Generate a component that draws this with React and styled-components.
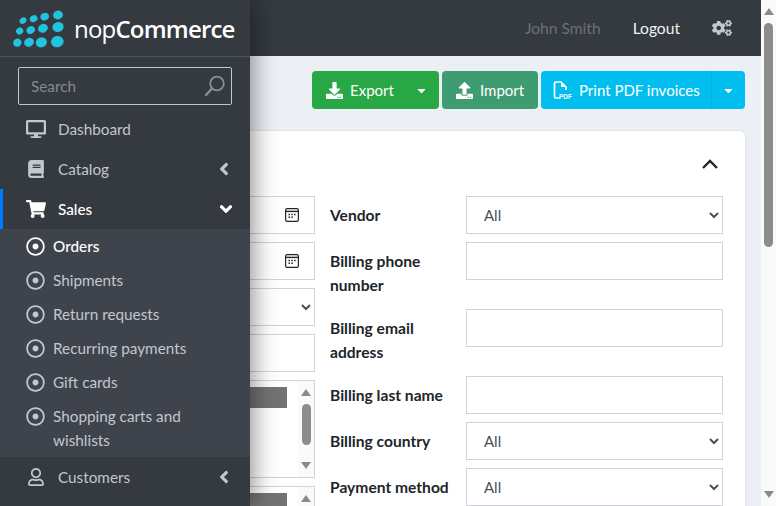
import * as React from 'react';
import styled, { createGlobalStyle } from 'styled-components';
import {
    FaDesktop, FaBook, FaShoppingCart, FaRegDotCircle, FaRegUser,
    FaAngleLeft, FaAngleDown, FaDownload, FaUpload, FaCogs, FaCaretDown
} from 'react-icons/fa';

const font = `Lato, "Noto Sans", "Liberation Sans", sans-serif`;

const GlobalStyle = createGlobalStyle`
html, body {
    margin: 0;
    padding: 0;
    height: 100%;
    overflow: hidden;
}
* {
    box-sizing: border-box;
}
body {
    font-family: ${font};
    font-size: 15.3px;
    color: #212529;
    background: #ecf0f5;
}
`;

const subItems = [
    { label: 'Orders', active: true },
    { label: 'Shipments' },
    { label: 'Return requests' },
    { label: 'Recurring payments' },
    { label: 'Gift cards' },
    { label: 'Shopping carts and wishlists' }
];

const Logo = () => (
    <svg width="60" height="46" viewBox="0 0 180 138">
        <g fill="#22c3e0">
            <ellipse cx="45" cy="47" rx="11" ry="9" transform="rotate(-35 45 47)" />
            <ellipse cx="77" cy="41" rx="12" ry="10" transform="rotate(-30 77 41)" />
            <ellipse cx="110" cy="35" rx="13" ry="11" transform="rotate(-25 110 35)" />
            <ellipse cx="150" cy="30" rx="15" ry="13" transform="rotate(-15 150 30)" />
            <ellipse cx="35" cy="78" rx="11" ry="10" transform="rotate(-35 35 78)" />
            <ellipse cx="68" cy="75" rx="13" ry="11" transform="rotate(-30 68 75)" />
            <ellipse cx="105" cy="70" rx="15" ry="13" transform="rotate(-25 105 70)" />
            <ellipse cx="150" cy="66" rx="17" ry="15" transform="rotate(-15 150 66)" />
            <ellipse cx="28" cy="113" rx="13" ry="12" transform="rotate(-30 28 113)" />
            <ellipse cx="63" cy="112" rx="15" ry="13" transform="rotate(-25 63 112)" />
            <ellipse cx="100" cy="112" rx="17" ry="15" transform="rotate(-20 100 112)" />
            <ellipse cx="148" cy="110" rx="19" ry="17" transform="rotate(-10 148 110)" />
        </g>
    </svg>
);

const SearchGlyph = () => (
    <svg width="22" height="22" viewBox="0 0 22 22" fill="none" stroke="#8b9097" strokeWidth="1.8">
        <circle cx="13" cy="8.5" r="6.8" />
        <path d="M8 13.5 L2 20" strokeWidth="2.4" strokeLinecap="round" />
    </svg>
);

const CalendarGlyph = () => (
    <svg width="14" height="14" viewBox="0 0 14 14" fill="none" stroke="#212529">
        <rect x="0.6" y="0.6" width="12.8" height="12.8" rx="1.6" strokeWidth="1.2" />
        <path d="M1 3.4 H13" strokeWidth="1.4" />
        <path d="M3.5 6.500h1.500M6.300 6.500h1.500M9.100 6.500h1.500M3.500 9.300h1.500M6.300 9.300h1.500" strokeWidth="1.5" />
    </svg>
);

const PdfGlyph = () => (
    <svg width="19" height="19" viewBox="0 0 19 19" fill="none">
        <path d="M7 17H3a1.5 1.5 0 0 1-1.5-1.5V2.500A1.500 1.500 0 0 1 3 1h5l5 5v3" stroke="#fff" strokeWidth="1.7" />
        <path d="M8 1v5h5z" fill="#fff" />
        <text x="6" y="18" fontFamily="Liberation Sans, sans-serif" fontWeight="700" fontSize="6.5" fill="#fff">PDF</text>
    </svg>
);

const CollapseGlyph = () => (
    <svg width="16" height="10" viewBox="0 0 16 10" fill="none" stroke="#212529" strokeWidth="2.4">
        <path d="M1 9 L8 2 L15 9" />
    </svg>
);

const App = () => (
    <Shell>
        <GlobalStyle />
        <Sidebar>
            <Brand>
                <Logo />
                <BrandText>nop<b>Commerce</b></BrandText>
            </Brand>
            <SearchBox>
                <SearchInput placeholder="Search" />
                <SearchGlyph />
            </SearchBox>
            <Menu>
                <MenuItem><MenuIcon><FaDesktop /></MenuIcon>Dashboard</MenuItem>
                <MenuItem><MenuIcon $small><FaBook /></MenuIcon>Catalog<Arrow><FaAngleLeft /></Arrow></MenuItem>
                <MenuItem $open><MenuIcon><FaShoppingCart /></MenuIcon>Sales<Arrow $down><FaAngleDown /></Arrow></MenuItem>
                <SubMenu>
                    {subItems.map(item => (
                        <SubItem key={item.label} $active={item.active}>
                            <SubIcon><FaRegDotCircle /></SubIcon>
                            <span>{item.label}</span>
                        </SubItem>
                    ))}
                </SubMenu>
                <MenuItem><MenuIcon $small><FaRegUser /></MenuIcon>Customers<Arrow><FaAngleLeft /></Arrow></MenuItem>
            </Menu>
        </Sidebar>
        <Main>
            <TopBar>
                <UserName>John Smith</UserName>
                <Logout>Logout</Logout>
                <Gears><FaCogs /></Gears>
            </TopBar>
            <Actions>
                <Button $bg="#28a745" $width="127px">
                    <BtnIcon><FaDownload /></BtnIcon>Export<Caret><FaCaretDown /></Caret>
                </Button>
                <Button $bg="#3f9c72" $width="96px">
                    <BtnIcon><FaUpload /></BtnIcon>Import
                </Button>
                <SplitButton>
                    <SplitMain><BtnIcon><PdfGlyph /></BtnIcon>Print PDF invoices</SplitMain>
                    <SplitCaret><FaCaretDown /></SplitCaret>
                </SplitButton>
            </Actions>
            <Card>
                <CardHead><CollapseGlyph /></CardHead>
                <CardBody>
                    <LeftCol>
                        <Field><CalendarGlyph /></Field>
                        <Field><CalendarGlyph /></Field>
                        <Select><option>&nbsp;</option></Select>
                        <Field />
                        <ListBox>
                            <ListTag />
                            <ListScroll>
                                <ScrollUp />
                                <ListThumb />
                                <ScrollDown />
                            </ListScroll>
                        </ListBox>
                        <ListBox>
                            <ListTag />
                            <ListScroll>
                                <ScrollUp />
                                <ListThumb />
                                <ScrollDown />
                            </ListScroll>
                        </ListBox>
                    </LeftCol>
                    <RightCol>
                        <Row><Label>Vendor</Label><Select><option>All</option></Select></Row>
                        <Row><Label>Billing phone number</Label><Field /></Row>
                        <Row><Label>Billing email address</Label><Field /></Row>
                        <Row><Label>Billing last name</Label><Field /></Row>
                        <Row><Label>Billing country</Label><Select><option>All</option></Select></Row>
                        <Row><Label>Payment method</Label><Select><option>All</option></Select></Row>
                    </RightCol>
                </CardBody>
            </Card>
        </Main>
        <PageScroll>
            <ScrollUp />
            <PageThumb />
            <Spacer />
            <ScrollDown />
        </PageScroll>
    </Shell>
);

const Shell = styled.div`
display: flex;
height: 506px;
width: 776px;
overflow: hidden;
`;

const Sidebar = styled.aside`
position: relative;
z-index: 2;
flex: 0 0 250px;
height: 506px;
overflow: hidden;
background: #343a40;
color: #c2c7d0;
box-shadow: 4px 0 22px rgba(0, 0, 0, 0.42);
`;

const Brand = styled.div`
display: flex;
align-items: center;
gap: 6px;
height: 57px;
padding-left: 8px;
border-bottom: 1px solid #4b545c;
`;

const BrandText = styled.div`
font-family: "Open Sans", sans-serif;
font-size: 24px;
font-weight: 400;
letter-spacing: -0.8px;
color: #fff;

> b {
    font-weight: 600;
}
`;

const SearchBox = styled.div`
display: flex;
align-items: center;
height: 38px;
margin: 10px 18px 5px;
padding: 0 5px 0 12px;
border: 1px solid #c2c7d0;
border-radius: 2px;
`;

const SearchInput = styled.input`
flex: 1;
min-width: 0;
border: 0;
outline: 0;
padding: 0;
background: transparent;
font: 15.3px ${font};
color: #fff;

&::placeholder {
    color: #858a91;
    opacity: 1;
}
`;

const Menu = styled.nav`
display: flex;
flex-direction: column;
margin-top: -1px;
`;

const MenuItem = styled.div`
display: flex;
align-items: center;
height: 40px;
padding-left: 25px;
border-left: 3px solid ${props => props.$open ? '#007bff' : 'transparent'};
color: ${props => props.$open ? '#fff' : '#c2c7d0'};
font-weight: ${props => props.$open ? 500 : 400};
`;

const MenuIcon = styled.span`
display: flex;
justify-content: center;
flex: 0 0 22px;
margin-left: -3px;
margin-right: 11px;
font-size: ${props => props.$small ? '18px' : '20px'};
`;

const Arrow = styled.span`
display: flex;
margin-left: auto;
margin-right: ${props => props.$down ? '14px' : '16px'};
font-size: 20px;
`;

const SubMenu = styled.div`
display: flex;
flex-direction: column;
background: #3f444c;
`;

const SubItem = styled.div`
display: flex;
align-items: flex-start;
gap: 8px;
padding: 5px 40px 5px 26px;
line-height: 24px;
color: ${props => props.$active ? '#fff' : '#c2c7d0'};
font-weight: ${props => props.$active ? 500 : 400};
`;

const SubIcon = styled.span`
display: flex;
align-items: center;
height: 24px;
font-size: 19px;
`;

const Main = styled.div`
flex: 1;
min-width: 0;
display: flex;
flex-direction: column;
`;

const TopBar = styled.header`
display: flex;
align-items: center;
justify-content: flex-end;
flex: 0 0 56px;
padding-right: 29px;
background: #343a40;
font-size: 15.6px;
`;

const UserName = styled.span`
color: #6c7076;
margin-right: 32px;
`;

const Logout = styled.span`
color: #f2f3f4;
margin-right: 32px;
`;

const Gears = styled.span`
display: flex;
color: #c2c7d0;
font-size: 20px;
`;

const Actions = styled.div`
display: flex;
justify-content: flex-end;
gap: 3px;
padding: 15px 16px 22px;
font-size: 15px;
`;

const Button = styled.div`
display: flex;
align-items: center;
height: 38px;
width: ${props => props.$width};
padding-left: 13px;
border-radius: 4px;
background: ${props => props.$bg};
color: #fff;
`;

const BtnIcon = styled.span`
display: flex;
justify-content: center;
flex: 0 0 18px;
margin-right: 7px;
font-size: 17px;
`;

const Caret = styled.span`
display: flex;
margin-left: auto;
margin-right: 11px;
font-size: 13px;
`;

const SplitButton = styled.div`
display: flex;
height: 38px;
width: 204px;
border-radius: 4px;
background: #00bff0;
color: #fff;
`;

const SplitMain = styled.div`
display: flex;
align-items: center;
flex: 1;
padding-left: 12px;
`;

const SplitCaret = styled.div`
display: flex;
align-items: center;
justify-content: center;
flex: 0 0 34px;
padding-right: 1px;
border-left: 1px solid #0eaedb;
font-size: 13px;
`;

const Card = styled.section`
flex: 1;
margin-right: 16px;
padding: 0 22px 0 0;
border-radius: 0 5px 0 0;
background: #fff;
box-shadow: 0 0 2px rgba(0, 0, 0, 0.2);
`;

const CardHead = styled.div`
display: flex;
align-items: center;
justify-content: flex-end;
height: 65px;
padding-right: 5px;
`;

const CardBody = styled.div`
display: flex;
gap: 15px;
`;

const LeftCol = styled.div`
display: flex;
flex-direction: column;
flex: 0 0 66px;
margin-left: -1px;
gap: 8px;
`;

const RightCol = styled.div`
display: flex;
flex-direction: column;
flex: 1;
gap: 8px;
`;

const Row = styled.div`
display: grid;
grid-template-columns: 136px 1fr;
align-items: start;
`;

const Label = styled.div`
width: 125px;
padding: 7px 0 4px;
line-height: 24px;
font-size: 15.6px;
font-weight: 700;
color: #212529;
`;

const Field = styled.div`
display: flex;
align-items: center;
justify-content: flex-end;
height: 38px;
padding-right: 15px;
border: 1px solid #ced4da;
background: #fff;
`;

const Select = styled.select`
display: block;
width: 100%;
height: 38px;
padding: 0 12px 1px 13px;
border: 1px solid #ced4da;
border-radius: 0;
background: #fff;
font: 15px ${font};
color: #495057;
`;

const ListBox = styled.div`
display: flex;
justify-content: space-between;
flex: 0 0 98px;
padding: 6px 0 0;
border: 1px solid #ced4da;
background: #fff;
`;

const ListTag = styled.div`
width: 37px;
height: 21px;
background: #737373;
`;

const ListScroll = styled.div`
display: flex;
flex-direction: column;
align-items: center;
width: 16px;
height: 96px;
margin-top: -6px;
padding: 8px 0;
background: #fafafa;
`;

const ListThumb = styled.div`
width: 9px;
height: 41px;
margin: 8px 0 auto;
border-radius: 5px;
background: #8c8c8c;
`;

const ScrollUp = styled.div`
flex: none;
width: 0;
height: 0;
border-left: 5px solid transparent;
border-right: 5px solid transparent;
border-bottom: 7px solid #8a8a8a;
`;

const ScrollDown = styled(ScrollUp)`
border-bottom: 0;
border-top: 7px solid #8a8a8a;
`;

const PageScroll = styled.div`
display: flex;
flex-direction: column;
align-items: center;
flex: 0 0 15px;
padding: 8px 0;
background: #fafafa;
`;

const PageThumb = styled.div`
width: 9px;
height: 224px;
margin-top: 8px;
border-radius: 5px;
background: #8c8c8c;
`;

const Spacer = styled.div`
flex: 1;
`;

export default App;
